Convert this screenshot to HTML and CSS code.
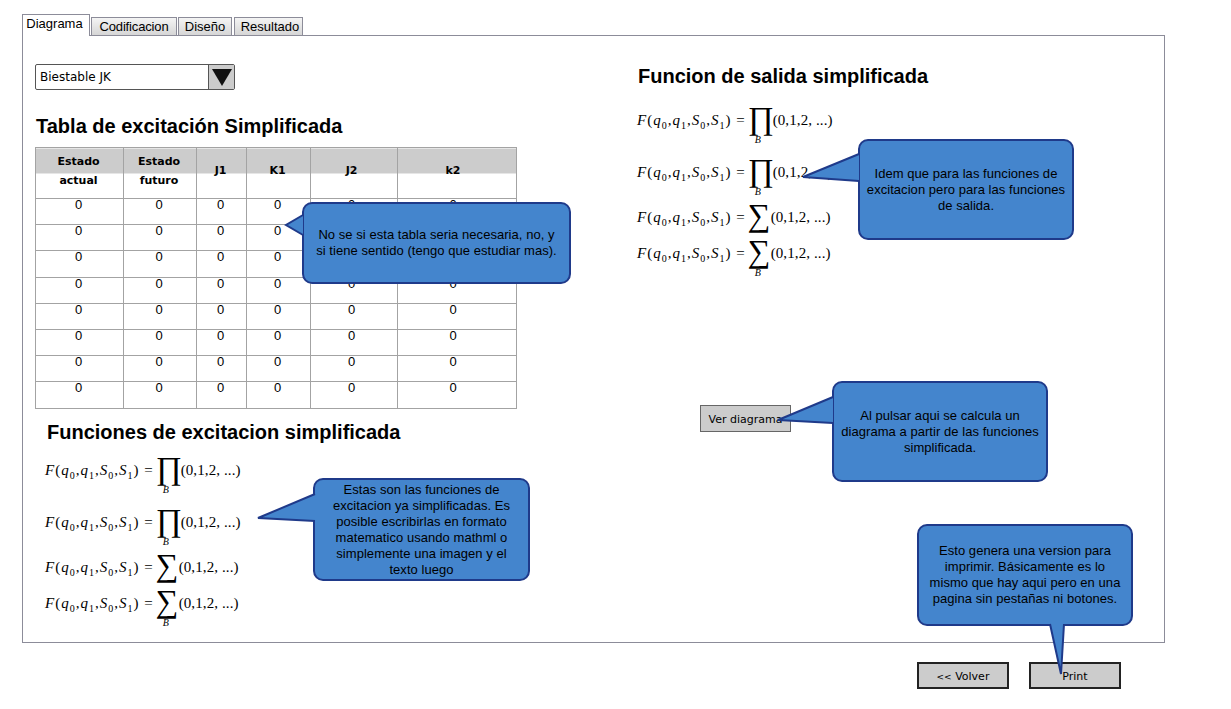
FILE: index.html
```html
<!DOCTYPE html>
<html lang="en">
<head>
<meta charset="UTF-8">
<meta name="viewport" content="width=device-width, initial-scale=1.0">
<title>Diagrama</title>
<link rel="stylesheet" href="styles.css">
</head>
<body>
<div class="page">
    <div class="tabs">
        <div class="tab active">Diagrama</div>
        <div class="tab tab-cod">Codificacion</div>
        <div class="tab tab-dis">Diseño</div>
        <div class="tab tab-res">Resultado</div>
    </div>

    <div class="panel">
        <div class="col-left">
            <div class="select">
                <span class="select-text">Biestable JK</span>
                <span class="select-btn"><span class="arrow"></span></span>
            </div>

            <h2 class="title-table">Tabla de excitación Simplificada</h2>
            <table class="grid">
                <colgroup>
                    <col class="c1"><col class="c2"><col class="c3"><col class="c4"><col class="c5"><col class="c6">
                </colgroup>
                <tr class="head">
                    <th>Estado<br>actual</th>
                    <th>Estado<br>futuro</th>
                    <th>J1</th>
                    <th>K1</th>
                    <th>J2</th>
                    <th>k2</th>
                </tr>
                <tr><td>0</td><td>0</td><td>0</td><td>0</td><td>0</td><td>0</td></tr>
                <tr><td>0</td><td>0</td><td>0</td><td>0</td><td>0</td><td>0</td></tr>
                <tr><td>0</td><td>0</td><td>0</td><td>0</td><td>0</td><td>0</td></tr>
                <tr><td>0</td><td>0</td><td>0</td><td>0</td><td>0</td><td>0</td></tr>
                <tr><td>0</td><td>0</td><td>0</td><td>0</td><td>0</td><td>0</td></tr>
                <tr><td>0</td><td>0</td><td>0</td><td>0</td><td>0</td><td>0</td></tr>
                <tr><td>0</td><td>0</td><td>0</td><td>0</td><td>0</td><td>0</td></tr>
                <tr><td>0</td><td>0</td><td>0</td><td>0</td><td>0</td><td>0</td></tr>
            </table>

            <h2 class="title-func">Funciones de excitacion simplificada</h2>
            <div class="formulas left">
                <div class="formula"><span class="lhs"><i>F</i>(<i>q</i><sub>0</sub>,<i>q</i><sub>1</sub>,<i>S</i><sub>0</sub>,<i>S</i><sub>1</sub>) =</span><span class="op"><span class="sym">∏</span><i class="under">B</i></span><span>(0,1,2, ...)</span></div>
                <div class="formula"><span class="lhs"><i>F</i>(<i>q</i><sub>0</sub>,<i>q</i><sub>1</sub>,<i>S</i><sub>0</sub>,<i>S</i><sub>1</sub>) =</span><span class="op"><span class="sym">∏</span><i class="under">B</i></span><span>(0,1,2, ...)</span></div>
                <div class="formula"><span class="lhs"><i>F</i>(<i>q</i><sub>0</sub>,<i>q</i><sub>1</sub>,<i>S</i><sub>0</sub>,<i>S</i><sub>1</sub>) =</span><span class="op sum"><span class="sym">∑</span></span><span>(0,1,2, ...)</span></div>
                <div class="formula"><span class="lhs"><i>F</i>(<i>q</i><sub>0</sub>,<i>q</i><sub>1</sub>,<i>S</i><sub>0</sub>,<i>S</i><sub>1</sub>) =</span><span class="op sum"><span class="sym">∑</span><i class="under">B</i></span><span>(0,1,2, ...)</span></div>
            </div>
        </div>

        <div class="col-right">
            <h2 class="title-out">Funcion de salida simplificada</h2>
            <div class="formulas">
                <div class="formula"><span class="lhs"><i>F</i>(<i>q</i><sub>0</sub>,<i>q</i><sub>1</sub>,<i>S</i><sub>0</sub>,<i>S</i><sub>1</sub>) =</span><span class="op"><span class="sym">∏</span><i class="under">B</i></span><span>(0,1,2, ...)</span></div>
                <div class="formula"><span class="lhs"><i>F</i>(<i>q</i><sub>0</sub>,<i>q</i><sub>1</sub>,<i>S</i><sub>0</sub>,<i>S</i><sub>1</sub>) =</span><span class="op"><span class="sym">∏</span><i class="under">B</i></span><span>(0,1,2, ...)</span></div>
                <div class="formula"><span class="lhs"><i>F</i>(<i>q</i><sub>0</sub>,<i>q</i><sub>1</sub>,<i>S</i><sub>0</sub>,<i>S</i><sub>1</sub>) =</span><span class="op sum"><span class="sym">∑</span></span><span>(0,1,2, ...)</span></div>
                <div class="formula"><span class="lhs"><i>F</i>(<i>q</i><sub>0</sub>,<i>q</i><sub>1</sub>,<i>S</i><sub>0</sub>,<i>S</i><sub>1</sub>) =</span><span class="op sum"><span class="sym">∑</span><i class="under">B</i></span><span>(0,1,2, ...)</span></div>
            </div>
            <button class="btn-diagram">Ver diagrama</button>
        </div>
    </div>

    <div class="actions">
        <button class="btn-action"><span class="lt">&lt;&lt;</span> Volver</button>
        <button class="btn-action">Print</button>
    </div>

    <!-- notas sobre el mockup -->
    <div class="note note-table">No se si esta tabla seria necesaria, no, y<br>si tiene sentido (tengo que estudiar mas).</div>
    <div class="note note-func">Estas son las funciones de<br>excitacion ya simplificadas. Es<br>posible escribirlas en formato<br>matematico usando mathml o<br>simplemente una imagen y el<br>texto luego</div>
    <div class="note note-out">Idem que para las funciones de<br>excitacion pero para las funciones<br>de salida.</div>
    <div class="note note-diagram">Al pulsar aqui se calcula un<br>diagrama a partir de las funciones<br>simplificada.</div>
    <div class="note note-print">Esto genera una version para<br>imprimir. Básicamente es lo<br>mismo que hay aqui pero en una<br>pagina sin pestañas ni botones.</div>

    <svg class="tails" width="1231" height="709" viewBox="0 0 1231 709">
        <path class="tail-fill" d="M303 215 L286 225 L303 235 Z"/>
        <path class="tail-line" d="M303 215 L286 225 L303 235"/>
        <path class="tail-fill" d="M315 494 L258 518 L315 521 Z"/>
        <path class="tail-line" d="M315 494 L258 518 L315 521"/>
        <path class="tail-fill" d="M859 154 L803 177 L859 181 Z"/>
        <path class="tail-line" d="M859 154 L803 177 L859 181"/>
        <path class="tail-fill" d="M833 397 L778 420 L833 423 Z"/>
        <path class="tail-line" d="M833 397 L778 420 L833 423"/>
        <path class="tail-fill" d="M1050 624 L1061 674 L1064 624 Z"/>
        <path class="tail-line" d="M1050 624 L1061 674 L1064 624"/>
    </svg>
</div>
</body>
</html>
```

FILE: styles.css
```css
* {
    box-sizing: border-box;
}
body {
    margin: 0;
    background-color: #fff;
    font-family: "Liberation Sans", Arial, sans-serif;
    color: #000;
}
.page {
    position: relative;
    width: 1231px;
    height: 709px;
    padding: 14px 0 0 22px;
    overflow: hidden;
}

/* tabs */
.tabs {
    display: flex;
    align-items: flex-end;
    height: 21px;
    gap: 1px;
}
.tab {
    height: 18px;
    font-size: 13px;
    line-height: 17px;
    text-align: center;
    border: 1px solid #8c8c99;
    border-bottom: none;
    background: linear-gradient(#f4f4f4, #d6d6d6);
    position: relative;
}
.tab.active {
    width: 68px;
    height: 22px;
    margin-bottom: -1px;
    padding-right: 3px;
    line-height: 18px;
    background: #fff;
    z-index: 1;
}
.tab-cod { width: 86px; letter-spacing: -0.15px; }
.tab-dis { width: 54px; }
.tab-res { width: 69px; margin-left: 1px; padding-left: 3px; }

.panel {
    display: flex;
    width: 1143px;
    height: 608px;
    border: 1px solid #8c8c99;
}
.col-left {
    width: 615px;
    padding: 28px 0 0 12px;
}
.col-right {
    padding-top: 28px;
}

/* combo */
.select {
    display: flex;
    width: 200px;
    height: 26px;
    border: 1px solid #555;
    border-radius: 2px;
    font-family: "DejaVu Sans", sans-serif;
    font-size: 12px;
}
.select-text {
    flex: 1;
    padding-left: 4px;
    line-height: 24px;
}
.select-btn {
    display: flex;
    align-items: center;
    justify-content: center;
    width: 26px;
    background-color: #ccc;
    border-left: 1px solid #555;
}
.arrow {
    width: 0;
    height: 0;
    border-left: 10px solid transparent;
    border-right: 10px solid transparent;
    border-top: 17px solid #111;
}

h2 {
    margin: 0;
    font-size: 20px;
    font-weight: bold;
    line-height: 24px;
}
.title-table {
    margin: 24px 0 9px 1px;
}
.title-func {
    margin: 11px 0 17px 12px;
}
.title-out {
    margin-bottom: 23px;
}

/* tabla */
.grid {
    border-collapse: collapse;
    table-layout: fixed;
    width: 481px;
    font-size: 13px;
}
.c1 { width: 88px; }
.c2 { width: 73px; }
.c3 { width: 50px; }
.c4 { width: 64px; }
.c5 { width: 87px; }
.c6 { width: 119px; }
.grid th, .grid td {
    border: 1px solid #a3a3a3;
    padding: 0 2px 0 0;
    text-align: center;
}
.grid th {
    height: 51px;
    font-family: "DejaVu Sans", sans-serif;
    font-size: 11px;
    line-height: 19px;
    padding-bottom: 5px;
    background: linear-gradient(#ccc 25px, #fff 25px);
}
.grid td {
    height: 26.2px;
    line-height: 11px;
    vertical-align: top;
}
.grid tr > :nth-child(5) {
    padding-right: 5px;
}
.grid tr > :nth-child(6) {
    padding-right: 8px;
}

/* formulas */
.formulas {
    display: grid;
    grid-template-rows: 52px 45px 36px 36px;
    font-family: "Liberation Serif", serif;
    font-size: 15px;
}
.formulas.left {
    margin-left: 10px;
}
.col-right .formulas {
    margin-left: -1px;
}
.formula {
    display: flex;
    height: 18px;
    line-height: 18px;
    white-space: nowrap;
    letter-spacing: 0.1px;
}
.lhs {
    letter-spacing: 1px;
}
.formula sub {
    font-size: 10px;
    line-height: 0;
}
.op {
    position: relative;
    width: 27px;
    text-align: center;
    padding-left: 2px;
}
.op.sum {
    width: 25px;
}
.sym {
    position: relative;
    top: -2px;
    font-size: 32px;
    line-height: 18px;
}
.under {
    position: absolute;
    left: 9px;
    top: 23px;
    font-size: 10px;
    line-height: 12px;
}

/* botones */
.btn-diagram, .btn-action {
    font-family: "DejaVu Sans", sans-serif;
    font-size: 11px;
    background-color: #ccc;
    padding: 2px 0 0;
    color: #000;
}
.btn-diagram {
    display: block;
    width: 91px;
    height: 27px;
    margin: 125px 0 0 62px;
    border: 1px solid #666;
}
.actions {
    display: flex;
    gap: 20px;
    margin: 19px 0 0 895px;
}
.btn-action {
    width: 92px;
    height: 27px;
    border: 2px solid #222;
}
.lt {
    font-size: 9px;
}

/* notas */
.note {
    position: absolute;
    display: flex;
    align-items: center;
    justify-content: center;
    text-align: center;
    padding: 0 4px;
    font-size: 13px;
    letter-spacing: 0.05px;
    line-height: 16px;
    background-color: #4485cd;
    border: 2px solid #1f3a8a;
    border-radius: 10px;
}
.note-table { left: 302px; top: 202px; width: 269px; height: 82px; }
.note-func { left: 313px; top: 478px; width: 217px; height: 103px; }
.note-out { left: 858px; top: 139px; width: 216px; height: 101px; }
.note-diagram { left: 832px; top: 381px; width: 216px; height: 101px; }
.note-print { left: 917px; top: 524px; width: 216px; height: 102px; }

.tails {
    position: absolute;
    left: 0;
    top: 0;
    pointer-events: none;
}
.tail-fill {
    fill: #4485cd;
}
.tail-line {
    fill: none;
    stroke: #1f3a8a;
    stroke-width: 2;
}
```
